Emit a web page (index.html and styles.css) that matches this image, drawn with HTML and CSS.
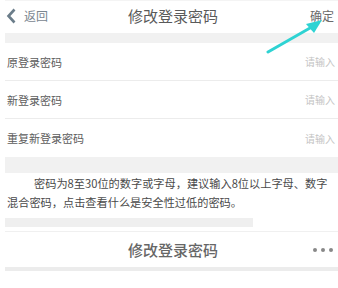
FILE: index.html
```html
<!DOCTYPE html>
<html lang="zh-CN">
  <head>
    <meta charset="UTF-8" />
    <title>修改登录密码</title>
    <link rel="stylesheet" href="styles.css">
  </head>
  <body>
    <div class="page">
      <!-- 顶部导航 -->
      <div class="nav-bar">
        <div class="nav-back">
          <svg class="back-icon" width="10" height="16" viewBox="0 0 10 16">
            <path d="M8.5 1.5 L2.5 8 L8.5 14.5" fill="none" stroke="#6b7d8a" stroke-width="2.6" stroke-linejoin="miter" />
          </svg>
          <span>返回</span>
        </div>
        <div class="nav-title">修改登录密码</div>
        <div class="nav-action">确定</div>
      </div>

      <div class="gap-band"></div>

      <!-- 密码输入 -->
      <div class="form-list">
        <div class="form-row">
          <span class="form-label">原登录密码</span>
          <span class="form-input">请输入</span>
        </div>
        <div class="form-row">
          <span class="form-label">新登录密码</span>
          <span class="form-input">请输入</span>
        </div>
        <div class="form-row">
          <span class="form-label">重复新登录密码</span>
          <span class="form-input">请输入</span>
        </div>
      </div>

      <div class="gap-band tall"></div>

      <div class="tip-text">
        密码为8至30位的数字或字母，建议输入8位以上字母、数字混合密码，点击查看什么是安全性过低的密码。
      </div>

      <div class="gap-band short"></div>

      <!-- 第二张截图的标题栏 -->
      <div class="nav-bar second">
        <div class="nav-title bold">修改登录密码</div>
        <div class="nav-more">
          <span class="dot"></span>
          <span class="dot"></span>
          <span class="dot"></span>
        </div>
      </div>
      <div class="bottom-line"></div>
    </div>

    <svg class="pointer-arrow" width="60" height="40" viewBox="0 0 60 40">
      <path d="M2 36 L44 12" stroke="#2fd3d3" stroke-width="3" stroke-linecap="round" />
      <polygon points="56,4 40,8 48,17" fill="#2fd3d3" />
    </svg>
  </body>
</html>
```

FILE: styles.css
```css
* {
  margin: 0;
  padding: 0;
  box-sizing: border-box;
}

body {
  font-family: "Noto Sans CJK SC", "Noto Sans", sans-serif;
  background: #ffffff;
  color: #555555;
  width: 338px;
  height: 288px;
  overflow: hidden;
  position: relative;
}

.page {
  padding-left: 5px;
}

/* 导航栏 */
.nav-bar {
  height: 33px;
  display: flex;
  align-items: center;
  position: relative;
  border-top: 1px solid #f4f4f4;
  padding-bottom: 3px;
}

.nav-back {
  display: flex;
  align-items: center;
  gap: 8px;
  padding-left: 1px;
  font-size: 12px;
  color: #7a8690;
}

.nav-title {
  position: absolute;
  left: 123px;
  font-size: 15px;
  color: #5a5a5a;
}

.nav-title.bold {
  font-weight: 500;
  color: #666666;
}

.nav-action {
  margin-left: auto;
  padding-right: 4px;
  font-size: 12px;
  color: #6a6a6a;
}

.gap-band {
  height: 10px;
  background: #f1f1f1;
}

.gap-band.tall {
  height: 16px;
}

.gap-band.short {
  height: 9px;
  width: 248px;
  background: #efefef;
}

/* 表单 */
.form-list {
  background: #ffffff;
}

.form-row {
  height: 38px;
  display: flex;
  align-items: center;
  justify-content: space-between;
  border-bottom: 1px solid #ececec;
  padding: 0 3px 0 2px;
}

.form-row:last-child {
  border-bottom: none;
}

.form-label {
  font-size: 11px;
  color: #5c5c5c;
}

.form-input {
  font-size: 10px;
  color: #c4c4c4;
}

/* 提示文字 */
.tip-text {
  font-size: 11.2px;
  line-height: 19px;
  color: #4a4a4a;
  text-indent: 27px;
  padding: 1px 4px 6px 2px;
}

.nav-bar.second {
  height: 36px;
  margin-top: 4px;
  padding-bottom: 0;
  border-top: 1px solid #f0f0f0;
}

.nav-more {
  margin-left: auto;
  padding-right: 5px;
  display: flex;
  gap: 4px;
}

.dot {
  width: 4px;
  height: 4px;
  border-radius: 50%;
  background: #888888;
}

.bottom-line {
  height: 4px;
  background: #ececec;
}

.pointer-arrow {
  position: absolute;
  left: 266px;
  top: 16px;
}
```
